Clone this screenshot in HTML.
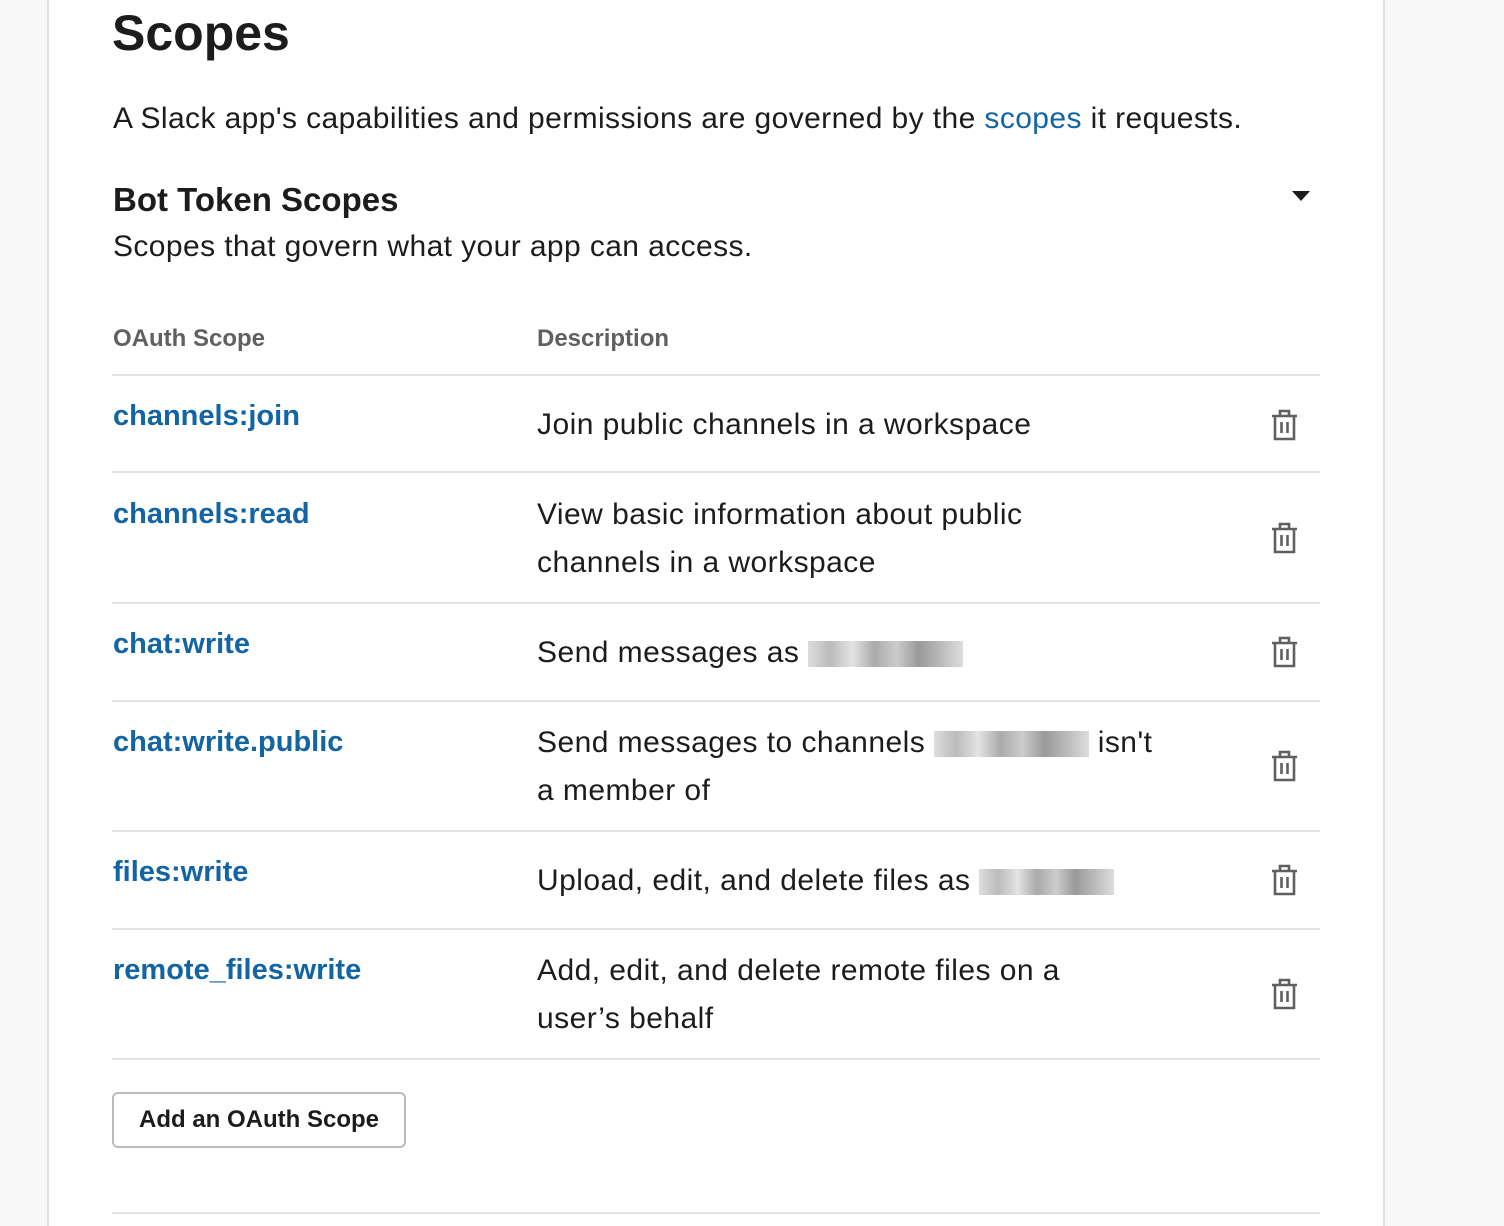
<!DOCTYPE html>
<html><head><meta charset="utf-8"><style>
*{margin:0;padding:0;box-sizing:border-box}
body{width:1504px;height:1226px;background:#f8f8f8;font-family:"Liberation Sans",sans-serif;color:#1d1c1d;position:relative;overflow:hidden}
.card{position:absolute;left:47px;top:0;width:1338px;height:1226px;background:#fff;border-left:2px solid #e2e2e2;border-right:2px solid #e2e2e2}
.a{position:absolute;white-space:nowrap}
.line{position:absolute;left:112px;width:1208px;height:2px;background:#e4e4e4}
.sc{font-size:29px;color:#1264a3;font-weight:bold;left:113px}
.d{font-size:30px;letter-spacing:0.45px;left:537px;line-height:48px}
.blur{display:inline-block;height:26px;vertical-align:middle;background:linear-gradient(90deg,#ddd,#bbb,#e3e3e3,#aaa,#ccc,#999,#bbb,#ddd)}
.tr{position:absolute;left:1270px;width:29px;height:35px}
</style></head><body>
<div class="card"></div>
<div class="a" style="left:112px;top:1px;font-size:50px;font-weight:bold;line-height:64px">Scopes</div>
<div class="a" style="left:113px;top:99px;font-size:30px;letter-spacing:0.4px;line-height:40px">A Slack app's capabilities and permissions are governed by the <span style="color:#1264a3">scopes</span> it requests.</div>
<div class="a" style="left:113px;top:180px;font-size:33px;font-weight:bold;line-height:40px">Bot Token Scopes</div>
<svg class="a" style="left:1291px;top:190px" width="20" height="12"><path d="M1 1h18l-9 10z" fill="#1d1c1d"/></svg>
<div class="a" style="left:113px;top:227px;font-size:30px;letter-spacing:0.4px;line-height:40px">Scopes that govern what your app can access.</div>
<div class="a" style="left:113px;top:325px;font-size:24px;font-weight:bold;color:#616061">OAuth Scope</div>
<div class="a" style="left:537px;top:325px;font-size:24px;font-weight:bold;color:#616061">Description</div>
<div class="line" style="top:374px"></div>
<div class="a sc" style="top:400px">channels:join</div>
<div class="a d" style="top:401px">Join public channels in a workspace</div>
<div class="line" style="top:471px"></div>
<div class="a sc" style="top:498px">channels:read</div>
<div class="a d" style="top:491px">View basic information about public<br>channels in a workspace</div>
<div class="line" style="top:602px"></div>
<div class="a sc" style="top:628px">chat:write</div>
<div class="a d" style="top:629px">Send messages as <span class="blur" style="width:155px"></span></div>
<div class="line" style="top:700px"></div>
<div class="a sc" style="top:726px">chat:write.public</div>
<div class="a d" style="top:719px">Send messages to channels <span class="blur" style="width:155px"></span> isn't<br>a member of</div>
<div class="line" style="top:830px"></div>
<div class="a sc" style="top:856px">files:write</div>
<div class="a d" style="top:857px">Upload, edit, and delete files as <span class="blur" style="width:135px"></span></div>
<div class="line" style="top:928px"></div>
<div class="a sc" style="top:954px">remote_files:write</div>
<div class="a d" style="top:947px">Add, edit, and delete remote files on a<br>user’s behalf</div>
<div class="line" style="top:1058px"></div>
<svg width="0" height="0" style="position:absolute"><defs><g id="t" fill="none" stroke="#616061" stroke-width="2.6"><path d="M2 9h25M10 9V4h9v5M5 9v23h19V9M11.5 15v11M17.5 15v11"/></g></defs></svg>
<svg class="tr" style="top:407px"><use href="#t"/></svg>
<svg class="tr" style="top:520px"><use href="#t"/></svg>
<svg class="tr" style="top:634px"><use href="#t"/></svg>
<svg class="tr" style="top:748px"><use href="#t"/></svg>
<svg class="tr" style="top:862px"><use href="#t"/></svg>
<svg class="tr" style="top:976px"><use href="#t"/></svg>
<div class="a" style="left:112px;top:1092px;width:294px;height:56px;border:2px solid #bbb;border-radius:6px;font-size:24px;font-weight:bold;text-align:center;line-height:52px">Add an OAuth Scope</div>
<div class="line" style="top:1212px"></div>
</body></html>
